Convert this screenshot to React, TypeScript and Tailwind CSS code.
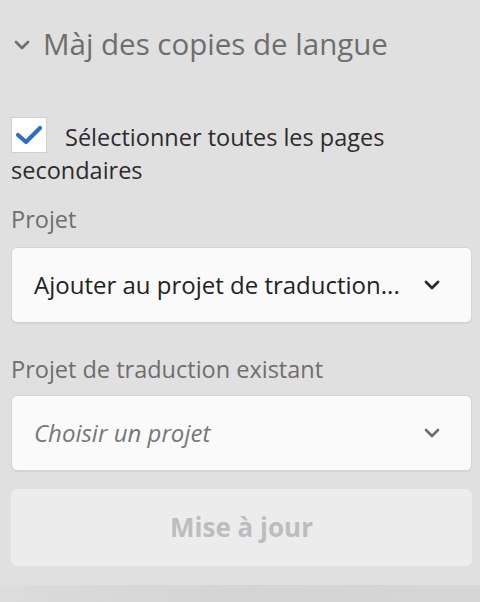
export default function App() {
  return (
    <div className="flex h-[602px] w-[480px] flex-col bg-[#e0e0e0] font-['Open_Sans',sans-serif]">
      <div className="flex flex-1 flex-col pl-[11px] pr-[8px]">
        <div className="mt-[25px] flex h-[38px] items-center gap-[13px] pl-[3px]">
          <svg width="16" height="10" viewBox="0 0 16 10" className="mt-[2px]">
            <path d="M2 2 L8 8 L14 2" fill="none" stroke="#6e6e6e" strokeWidth="2.6" strokeLinecap="round" strokeLinejoin="round" />
          </svg>
          <h2 className="text-[29.5px] leading-[38px] text-[#6e6e6e]">Màj des copies de langue</h2>
        </div>

        <div className="mt-[54px] text-[23.5px] leading-[33px] text-[#2c2c2c]">
          <span className="mr-[18px] inline-flex h-[36px] w-[36px] items-center justify-center border border-[#d0d0d0] bg-white align-baseline">
            <svg width="28" height="22" viewBox="0 0 28 22">
              <path d="M3 11 L11 18 L25 4" fill="none" stroke="#2d6dce" strokeWidth="4.2" strokeLinecap="round" strokeLinejoin="round" />
            </svg>
          </span>
          Sélectionner toutes les pages secondaires
        </div>

        <label className="mt-[16px] text-[23.5px] leading-[32px] text-[#6e6e6e]">Projet</label>
        <button
          type="button"
          className="mt-[12px] flex h-[76px] w-full items-center justify-between rounded-[6px] border border-[#d4d4d4] bg-[#fafafa] pl-[22px] pr-[30px] text-left shadow-[0_1px_1px_rgba(0,0,0,0.06)]"
        >
          <span className="text-[24px] text-[#222]">Ajouter au projet de traduction...</span>
          <svg width="18" height="12" viewBox="0 0 18 12">
            <path d="M3 3 L9 9 L15 3" fill="none" stroke="#2a2a2a" strokeWidth="2.8" strokeLinecap="round" strokeLinejoin="round" />
          </svg>
        </button>

        <label className="mt-[30px] text-[23.5px] leading-[32px] text-[#6e6e6e]">Projet de traduction existant</label>
        <button
          type="button"
          className="mt-[10px] flex h-[76px] w-full items-center justify-between rounded-[6px] border border-[#d4d4d4] bg-[#fafafa] pl-[22px] pr-[30px] text-left shadow-[0_1px_1px_rgba(0,0,0,0.06)]"
        >
          <span className="text-[24px] italic text-[#777]">Choisir un projet</span>
          <svg width="18" height="12" viewBox="0 0 18 12">
            <path d="M3 3 L9 9 L15 3" fill="none" stroke="#6e6e6e" strokeWidth="2.6" strokeLinecap="round" strokeLinejoin="round" />
          </svg>
        </button>

        <button
          type="button"
          className="mt-[18px] h-[77px] w-full rounded-[6px] bg-[#ececec] text-[26px] font-bold text-[#bdbdbd]"
        >
          Mise à jour
        </button>
      </div>
      <div className="h-[17px] bg-gradient-to-r from-[#dcdcdc] via-[#d4d4d4] to-[#d6d6d6]" />
    </div>
  );
}
